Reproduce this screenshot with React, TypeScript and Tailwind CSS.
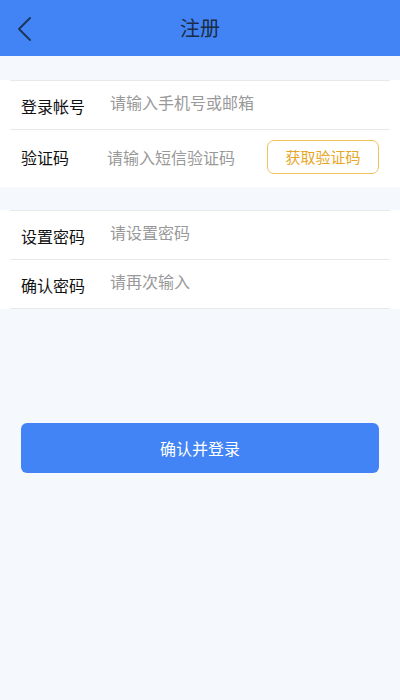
import { useState } from "react";

const font = { fontFamily: '"Noto Sans CJK SC", "Noto Sans", sans-serif' };

type FieldProps = {
  label: string;
  placeholder: string;
  type?: string;
};

function Field({ label, placeholder, type = "text" }: FieldProps) {
  const [value, setValue] = useState("");
  return (
    <div className="relative flex h-[49px] items-center border-b border-[#e8e8e8]">
      <span className="absolute left-[11px] top-[14px] text-[16px] leading-[22px] text-[#111]">{label}</span>
      <input
        type={type}
        value={value}
        onChange={(e) => setValue(e.target.value)}
        placeholder={placeholder}
        className="h-full min-w-0 flex-1 bg-transparent pb-[6px] pl-[100px] text-[16px] text-[#333] outline-none placeholder:text-[#999]"
        style={font}
      />
    </div>
  );
}

export default function App() {
  return (
    <div className="flex min-h-[700px] w-full flex-col bg-[#f5f9fe]" style={font}>
      <header className="relative flex h-[56px] items-center justify-center bg-[#4284f5]">
        <button className="absolute left-[13px] top-[14px] p-0.5">
          <svg width="18" height="26" viewBox="0 0 18 26" fill="none">
            <path d="M15 2 L4 13 L15 24" stroke="#1b3556" strokeWidth="1.8" strokeLinecap="round" strokeLinejoin="round" />
          </svg>
        </button>
        <h1 className="text-[20px] font-normal text-[#1b2c44]">注册</h1>
      </header>

      <section className="mt-[24px] bg-white px-[10px]">
        <div className="border-t border-[#e8e8e8]">
          <Field label="登录帐号" placeholder="请输入手机号或邮箱" />
          <div className="flex h-[57px] items-center pb-[3px]">
            <span className="ml-[11px] w-[86px] text-[16px] text-[#111]">验证码</span>
            <input
              placeholder="请输入短信验证码"
              className="h-full min-w-0 flex-1 bg-transparent text-[16px] outline-none placeholder:text-[#999]"
              style={font}
            />
            <button className="mr-[11px] h-[34px] w-[112px] shrink-0 rounded-[7px] border border-[#f1c25a] text-[15px] text-[#e8a628]">
              获取验证码
            </button>
          </div>
        </div>
      </section>

      <section className="mt-[23px] bg-white px-[10px]">
        <div className="border-t border-[#e8e8e8]">
          <Field label="设置密码" placeholder="请设置密码" type="password" />
          <Field label="确认密码" placeholder="请再次输入" type="password" />
        </div>
      </section>

      <div className="mt-[114px] px-[21px]">
        <button className="h-[50px] w-full rounded-[6px] bg-[#4284f5] text-[16px] text-white">确认并登录</button>
      </div>
    </div>
  );
}
